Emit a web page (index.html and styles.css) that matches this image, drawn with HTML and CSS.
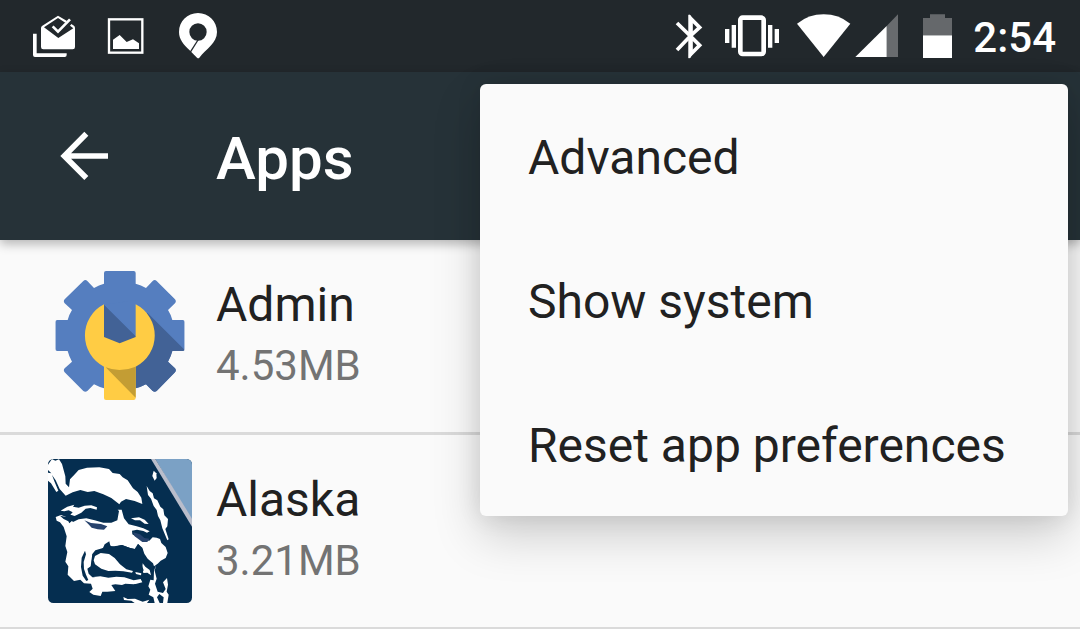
FILE: index.html
```html
<!DOCTYPE html>
<html lang="en">
  <head>
    <meta charset="utf-8" />
    <meta name="viewport" content="width=device-width, initial-scale=1" />
    <title>Apps</title>
    <link rel="stylesheet" href="styles.css">
  </head>
  <body>
    <div class="status-bar">
      <div class="notifications">
        <svg class="notification" viewBox="-6 0 216 216" aria-hidden="true">
          <path fill="#fff" d="M39 101H50V160H140V165Q140 171 134 171H45Q39 171 39 165Z" />
          <path fill="#fff" fill-rule="evenodd" d="M114 47L141 63L136 68L114 54L72 82L115 114L160 85L150 77L154 72L162 77Q165 80 165 84V141Q165 148 158 148H70Q63 148 63 141V84Q63 80 67 77Z" />
          <path fill="none" stroke="#fff" stroke-width="8" d="M98 79L114 95L150 58" />
        </svg>
        <svg class="notification" viewBox="210 0 216 216" aria-hidden="true">
          <rect x="267" y="58" width="100" height="100" fill="none" stroke="#fff" stroke-width="7" />
          <path fill="#fff" d="M279 119L299 105L320 126L339 118L357 130V147H279Z" />
        </svg>
        <svg class="notification" viewBox="426 0 216 216" aria-hidden="true">
          <path fill="#fff" fill-rule="evenodd" d="M534 39C566 39 591 64 591 96C591 130 558 147 538 173Q535 177 531 173L508 150C491 134 477 118 477 96C477 64 502 39 534 39ZM534 70A26 26 0 0 0 534 122A26 26 0 0 0 534 70Z" />
          <path stroke="#22282c" stroke-width="4" d="M510 158L534 120" />
        </svg>
      </div>
      <div class="system">
        <svg class="bluetooth" viewBox="0 0 168 216" aria-hidden="true">
          <path fill="none" stroke="#fff" stroke-width="11" d="M51 69L91 108L119 136L92 163V55L119 82L91 108L51 150" />
          <path fill="#fff" d="M85 45H91L98 58V160L91 174H85Z" />
        </svg>
        <svg class="vibrate" viewBox="168 0 216 216" aria-hidden="true">
          <rect x="241" y="53" width="70" height="109" rx="7" fill="none" stroke="#fff" stroke-width="14" />
          <path fill="#fff" d="M195 87H208V129H195ZM215 75H228V143H215ZM324 75H337V143H324ZM344 87H357V129H344Z" />
        </svg>
        <svg class="wifi" viewBox="384 0 195 216" aria-hidden="true">
          <path fill="#fff" d="M411 71Q446 43 491 43Q536 43 571 71L491 171Z" />
        </svg>
        <svg class="signal" viewBox="579 0 159 216" aria-hidden="true">
          <path fill="#686b6e" d="M680 78L714 43V171H680Z" />
          <path fill="#fff" d="M680 78V171H586Z" />
        </svg>
        <svg class="battery" viewBox="18 0 186 216" aria-hidden="true">
          <path fill="#65686b" d="M90 43H135V54H156V106H69V54H90Z" />
          <path fill="#fff" d="M69 106H156V174H69Z" />
        </svg>
        <time class="clock">2:54</time>
      </div>
    </div>

    <header class="toolbar">
      <a class="back" href="#" aria-label="Back">
        <svg class="back-icon" viewBox="24 30 216 216" aria-hidden="true">
          <path fill="none" stroke="#fff" stroke-width="17" d="M139 71L73 138L139 204M73 138H204" />
        </svg>
      </a>
      <h1 class="title">Apps</h1>
    </header>

    <main>
      <ul class="app-list">
        <li class="app">
          <svg class="app-icon" viewBox="24 12 432 432" aria-hidden="true">
            <defs>
              <clipPath id="gear">
                <path d="M192 39Q192 33 198 33H281Q287 33 287 39V71Q303 75 318 84L338 63Q344 57 350 63L405 118Q410 124 405 130L384 150Q393 164 397 180H428Q434 180 434 186V267Q434 273 428 273H397Q393 289 384 305L405 325Q410 331 405 337L350 393Q344 398 338 393L318 373Q303 381 287 385H192Q177 381 162 373L142 393Q136 398 130 393L74 337Q69 331 74 325L96 305Q87 289 83 273H52Q46 273 46 267V186Q46 180 52 180H83Q87 164 96 150L74 130Q69 124 74 118L130 63Q136 57 142 63L162 84Q177 75 192 71Z" />
              </clipPath>
            </defs>
            <g clip-path="url(#gear)">
              <path fill="#557ebf" d="M24 12H456V444H24Z" />
              <path fill="#426296" d="M192 134L287 229L322 158L456 292V444H287L192 330Z" />
              <path fill="#557ebf" d="M194 134L287 226V120Z" />
            </g>
            <path fill="#fc4" d="M192 133V231L239 250L287 231V133A105 105 0 0 1 287 320V414Q287 420 281 420H198Q192 420 192 414V320A105 105 0 0 1 192 133Z" />
            <path fill="#c39d34" d="M197 322Q240 339 287 320V413Z" />
          </svg>
          <div class="app-text">
            <span class="app-name">Admin</span>
            <span class="app-size">4.53MB</span>
          </div>
        </li>
        <li class="app">
          <svg class="app-icon" viewBox="24 27 432 432" aria-hidden="true">
            <defs>
              <clipPath id="tile"><rect x="24" y="27" width="432" height="432" rx="16" /></clipPath>
            </defs>
            <g clip-path="url(#tile)">
              <path fill="#052e50" d="M24 27H456V459H24Z" />
              <path fill="#7ba1c5" d="M346 27H456V214Z" />
              <path fill="#b9bdcb" d="M333 27H346L456 206V230Z" />
              <g fill="#fff">
                <!-- hair and forehead -->
                <path d="M36 27L24 44V60L34 70L24 68V92L33 100L49 126L55 122L44 96L36 75L47 91L59 117L77 137L98 127L121 120L143 126L163 123L190 133L214 144L238 163L243 155L258 147L284 153L307 162L304 143L293 126L279 115L263 91L248 82L239 72L218 69L207 57L178 52L141 53L116 60L103 74L90 88L87 112L77 101L76 79L66 42L57 28L46 32Z" />
                <path d="M341 62L349 70L350 84L344 92L337 78Z" />
                <path d="M320 108L329 123L338 130L342 145L352 151L361 170L370 178L373 196L384 207L382 229L376 237L386 268L382 271L367 235L361 211L354 198L350 180L341 168L333 146L324 135Z" />
                <!-- brow lines -->
                <path d="M62 182L82 170L103 164L99 170L116 173L134 167L154 166L171 172L170 179L151 174L137 176L124 188L104 198L91 194L98 187L86 181L73 184Z" />
                <!-- face -->
                <path d="M47 201L63 195L87 204L99 216L116 208L139 205L164 211L190 218L214 218L232 211L237 183L233 179L245 179L252 205L266 223L290 229L310 235L329 244L321 248L310 243L291 239L276 242L277 253L293 263L311 271L328 272L338 262L350 263L360 267L364 279L377 291L383 309L377 324L362 332L353 341L342 349L339 340L323 326L313 311L307 293L294 282L293 299L271 294L244 285L224 290L209 287L208 274L194 283L189 294L166 301L157 312L152 349L142 356L146 371L157 382L193 383L226 386L255 389L273 398L291 398L282 403L256 401L246 405L226 403L214 405L226 423L202 425L187 425L182 438L160 434L148 426L158 416L153 401L132 400L121 389L102 393L83 374L85 349L76 335L82 306L76 288L80 259L71 231L60 217L50 212Z" />
                <path d="M273 205L297 202L314 209L326 222L314 221L300 211L285 211Z" />
                <path d="M308 340L316 350L329 360L333 376L322 368L310 369L307 354ZM349 343L344 362L350 386L345 401L353 425L369 429L377 417L369 397L381 384L384 404L380 425L386 434L382 459L369 459L371 442L358 432L351 442L359 459H344L340 442L326 434L331 419L325 409L331 389L341 391L342 363ZM250 441L263 447L285 446L308 455L328 449L321 459H284L274 452L252 450Z" />
              </g>
              <g fill="#052e50">
                <!-- cheek crease and eye lines -->
                <path d="M135 302L138 313L131 336L132 357L138 374L145 390L139 393L128 377L123 351L125 323Z" />
                <path d="M91 194L76 200L60 197L71 207L85 214L88 220L98 211L119 202L105 201Z" />
                <!-- moustache and mouth -->
                <path d="M207 276L213 290L247 285L270 294L284 297L294 281L308 298L310 329L304 341L311 361L301 374L305 390L288 397L270 384L230 381L190 380L160 378L148 364L153 350L158 312L181 300L194 291Z" />
              </g>
              <g fill="#fff">
                <!-- lip -->
                <path d="M165 318L182 309L207 312L224 324L240 343L259 358L279 363L276 368L250 364L226 362L205 363L184 356L165 343L161 331Z" />
                <path d="M286 366L304 370L303 376L288 372ZM160 381L181 379L205 383L229 380L253 382L281 391L302 387L307 397L287 402L254 397L222 393L183 392Z" />
              </g>
              <g fill="#27436d">
                <path d="M133 211L153 219L183 222L202 229L192 239L173 238L155 233L144 221Z" />
                <path d="M279 247L300 253L313 264L328 266L322 276L307 276L294 266L284 259Z" />
              </g>
            </g>
          </svg>
          <div class="app-text">
            <span class="app-name">Alaska</span>
            <span class="app-size">3.21MB</span>
          </div>
        </li>
      </ul>
    </main>

    <div class="menu" role="menu">
      <button class="menu-item" type="button" role="menuitem">Advanced</button>
      <button class="menu-item" type="button" role="menuitem">Show system</button>
      <button class="menu-item" type="button" role="menuitem">Reset app preferences</button>
    </div>
  </body>
</html>
```
FILE: styles.css
```css
* {
  box-sizing: border-box;
}
html,
body {
  margin: 0;
  padding: 0;
}
body {
  position: relative;
  min-height: 100vh;
  overflow: hidden;
  background: #fafafa;
  color: #212121;
  font-family: Roboto, 'Liberation Sans', sans-serif;
}
svg {
  display: block;
  flex: none;
  height: 72px;
}

/* status bar */
.status-bar {
  display: flex;
  justify-content: space-between;
  height: 72px;
  padding: 0 24px 0 18px;
  background: #22282c;
}
.notifications,
.system {
  display: flex;
  align-items: center;
}
.notification,
.vibrate {
  width: 72px;
}
.bluetooth {
  width: 56px;
}
.wifi {
  width: 65px;
}
.signal {
  width: 53px;
}
.battery {
  width: 62px;
}
.clock {
  padding: 4px 0 0 5px;
  color: #fff;
  font-size: 42px;
  font-weight: 500;
  line-height: 48px;
}

/* toolbar */
.toolbar {
  display: flex;
  align-items: center;
  height: 168px;
  padding: 0 48px;
  background: #263238;
  box-shadow: 0 4px 10px rgba(0, 0, 0, 0.28);
}
.back {
  width: 168px;
}
.back-icon {
  width: 72px;
}
.title {
  margin: 0;
  padding-top: 6px;
  color: #fff;
  font-size: 60px;
  font-weight: 500;
  line-height: 72px;
}

/* app list */
.app-list {
  margin: 0;
  padding: 0;
  list-style: none;
}
.app {
  display: flex;
  align-items: center;
  gap: 24px;
  height: 195px;
  padding: 0 48px;
  border-bottom: 3px solid #dadada;
}
.app-icon {
  width: 144px;
  height: 144px;
}
.app-text {
  display: flex;
  flex-direction: column;
  gap: 8px;
  padding-bottom: 4px;
}
.app-name {
  font-size: 48px;
  line-height: 56px;
}
.app-size {
  color: #737373;
  font-size: 42px;
  line-height: 50px;
}

/* overflow menu */
.menu {
  position: absolute;
  top: 84px;
  right: 12px;
  display: flex;
  flex-direction: column;
  min-width: 588px;
  border-radius: 6px;
  background: #fafafa;
  box-shadow: 0 20px 48px rgba(0, 0, 0, 0.18), 0 0 24px rgba(0, 0, 0, 0.1);
}
.menu-item {
  height: 144px;
  padding: 2px 48px 0;
  border: 0;
  background: none;
  color: inherit;
  font: inherit;
  font-size: 48px;
  text-align: left;
}
```
